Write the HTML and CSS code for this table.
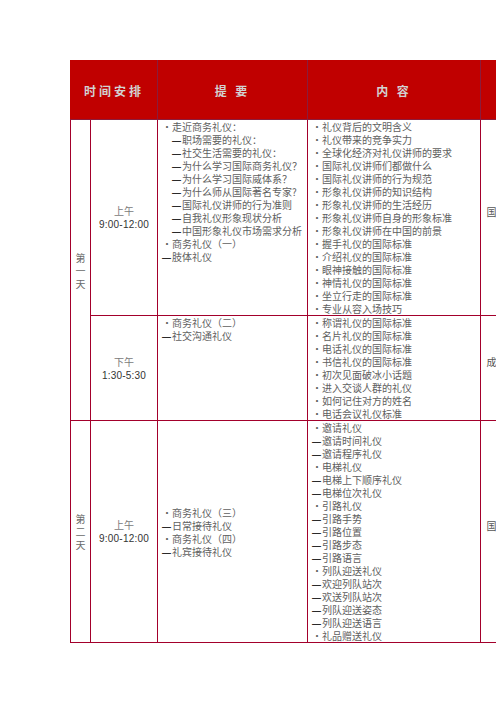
FILE: index.html
```html
<!DOCTYPE html>
<html lang="zh-CN">
<head>
<meta charset="utf-8">
<title>商务礼仪课程安排</title>
<link rel="stylesheet" href="styles.css">
</head>
<body>
<div class="page">
  <div class="clip">
    <table class="sched">
      <colgroup>
        <col class="c1"><col class="c2"><col class="c3"><col class="c4"><col class="c5">
      </colgroup>
      <thead>
        <tr>
          <th colspan="2">时间安排</th>
          <th>提 要</th>
          <th>内 容</th>
          <th class="th-last"></th>
        </tr>
      </thead>
      <tbody>
        <tr class="r1">
          <td rowspan="2" class="day">第<br>一<br>天</td>
          <td class="time"><span class="pd">上午</span><br><span class="hr">9:00-12:00</span></td>
          <td class="sum">
            <div>・走近商务礼仪：</div>
            <div class="i"><span class="d">—</span>职场需要的礼仪：</div>
            <div class="i"><span class="d">—</span>社交生活需要的礼仪：</div>
            <div class="i"><span class="d">—</span>为什么学习国际商务礼仪？</div>
            <div class="i"><span class="d">—</span>为什么学习国际威体系？</div>
            <div class="i"><span class="d">—</span>为什么师从国际著名专家?</div>
            <div class="i"><span class="d">—</span>国际礼仪讲师的行为准则</div>
            <div class="i"><span class="d">—</span>自我礼仪形象现状分析</div>
            <div class="i"><span class="d">—</span>中国形象礼仪市场需求分析</div>
            <div>・商务礼仪（一）</div>
            <div><span class="d">—</span>肢体礼仪</div>
          </td>
          <td class="con">
            <div>・礼仪背后的文明含义</div>
            <div>・礼仪带来的竞争实力</div>
            <div>・全球化经济对礼仪讲师的要求</div>
            <div>・国际礼仪讲师们都做什么</div>
            <div>・国际礼仪讲师的行为规范</div>
            <div>・形象礼仪讲师的知识结构</div>
            <div>・形象礼仪讲师的生活经历</div>
            <div>・形象礼仪讲师自身的形象标准</div>
            <div>・形象礼仪讲师在中国的前景</div>
            <div>・握手礼仪的国际标准</div>
            <div>・介绍礼仪的国际标准</div>
            <div>・眼神接触的国际标准</div>
            <div>・神情礼仪的国际标准</div>
            <div>・坐立行走的国际标准</div>
            <div>・专业从容入场技巧</div>
          </td>
          <td class="tch">国际礼仪培训专家<br>主讲</td>
        </tr>
        <tr class="r2">
          <td class="time"><span class="pd">下午</span><br><span class="hr">1:30-5:30</span></td>
          <td class="sum">
            <div>・商务礼仪（二）</div>
            <div><span class="d">—</span>社交沟通礼仪</div>
          </td>
          <td class="con">
            <div>・称谓礼仪的国际标准</div>
            <div>・名片礼仪的国际标准</div>
            <div>・电话礼仪的国际标准</div>
            <div>・书信礼仪的国际标准</div>
            <div>・初次见面破冰小话题</div>
            <div>・进入交谈人群的礼仪</div>
            <div>・如何记住对方的姓名</div>
            <div>・电话会议礼仪标准</div>
          </td>
          <td class="tch">成功礼仪讲师主讲<br>主讲</td>
        </tr>
        <tr class="r3">
          <td class="day">第<br>二<br>天</td>
          <td class="time"><span class="pd">上午</span><br><span class="hr">9:00-12:00</span></td>
          <td class="sum mid">
            <div>・商务礼仪（三）</div>
            <div><span class="d">—</span>日常接待礼仪</div>
            <div>・商务礼仪（四）</div>
            <div><span class="d">—</span>礼宾接待礼仪</div>
          </td>
          <td class="con">
            <div>・邀请礼仪</div>
            <div><span class="d">—</span>邀请时间礼仪</div>
            <div><span class="d">—</span>邀请程序礼仪</div>
            <div>・电梯礼仪</div>
            <div><span class="d">—</span>电梯上下顺序礼仪</div>
            <div><span class="d">—</span>电梯位次礼仪</div>
            <div>・引路礼仪</div>
            <div><span class="d">—</span>引路手势</div>
            <div><span class="d">—</span>引路位置</div>
            <div><span class="d">—</span>引路步态</div>
            <div><span class="d">—</span>引路语言</div>
            <div>・列队迎送礼仪</div>
            <div><span class="d">—</span>欢迎列队站次</div>
            <div><span class="d">—</span>欢送列队站次</div>
            <div><span class="d">—</span>列队迎送姿态</div>
            <div><span class="d">—</span>列队迎送语言</div>
            <div>・礼品赠送礼仪</div>
          </td>
          <td class="tch">国际礼仪培训专家<br>主讲</td>
        </tr>
      </tbody>
    </table>
  </div>
</div>
</body>
</html>
```

FILE: styles.css
```css
html, body {
  margin: 0;
  padding: 0;
  background: #ffffff;
}

.page {
  padding: 60px 0 0 70px;
}

.clip {
  width: 426px;
  overflow: hidden;
}

.sched {
  border-collapse: collapse;
  table-layout: fixed;
  width: 502px;
  font-family: "Noto Sans CJK SC", "Noto Sans CJK JP", sans-serif;
  font-size: 10px;
  line-height: 13px;
  color: #606060;
}

.c1 { width: 20px; }
.c2 { width: 67px; }
.c3 { width: 150px; }
.c4 { width: 173px; }
.c5 { width: 92px; }

.sched th {
  background: #c00000;
  height: 58px;
  padding: 0;
  border: 1px solid #8a1c3c;
  border-top-color: #c00000;
  border-left-color: #c00000;
  color: #d2d2d2;
  font-size: 12px;
  font-weight: bold;
  letter-spacing: 3px;
  text-align: center;
  vertical-align: middle;
}

.sched td {
  border: 1px solid #a3002b;
  padding: 0 0 0 4px;
  vertical-align: top;
  white-space: nowrap;
}

.d {
  display: inline-block;
  width: 10px;
  font-weight: bold;
  color: #2a2a2a;
  transform: scaleX(1.1);
}

.sched td.day {
  padding: 0;
  text-align: center;
  vertical-align: middle;
  color: #6a6a6a;
}

.sched td.time {
  padding: 0;
  text-align: center;
  vertical-align: middle;
}

.pd {
  color: #7a7a7a;
}

.hr {
  font-family: "Liberation Sans", Arial, sans-serif;
  font-size: 10px;
  letter-spacing: 0.2px;
  color: #333333;
}

.sched td.mid {
  vertical-align: middle;
}

.sum .i {
  padding-left: 10px;
}

.sched td.tch {
  padding: 0;
  text-align: center;
  vertical-align: middle;
  color: #555555;
}
```
